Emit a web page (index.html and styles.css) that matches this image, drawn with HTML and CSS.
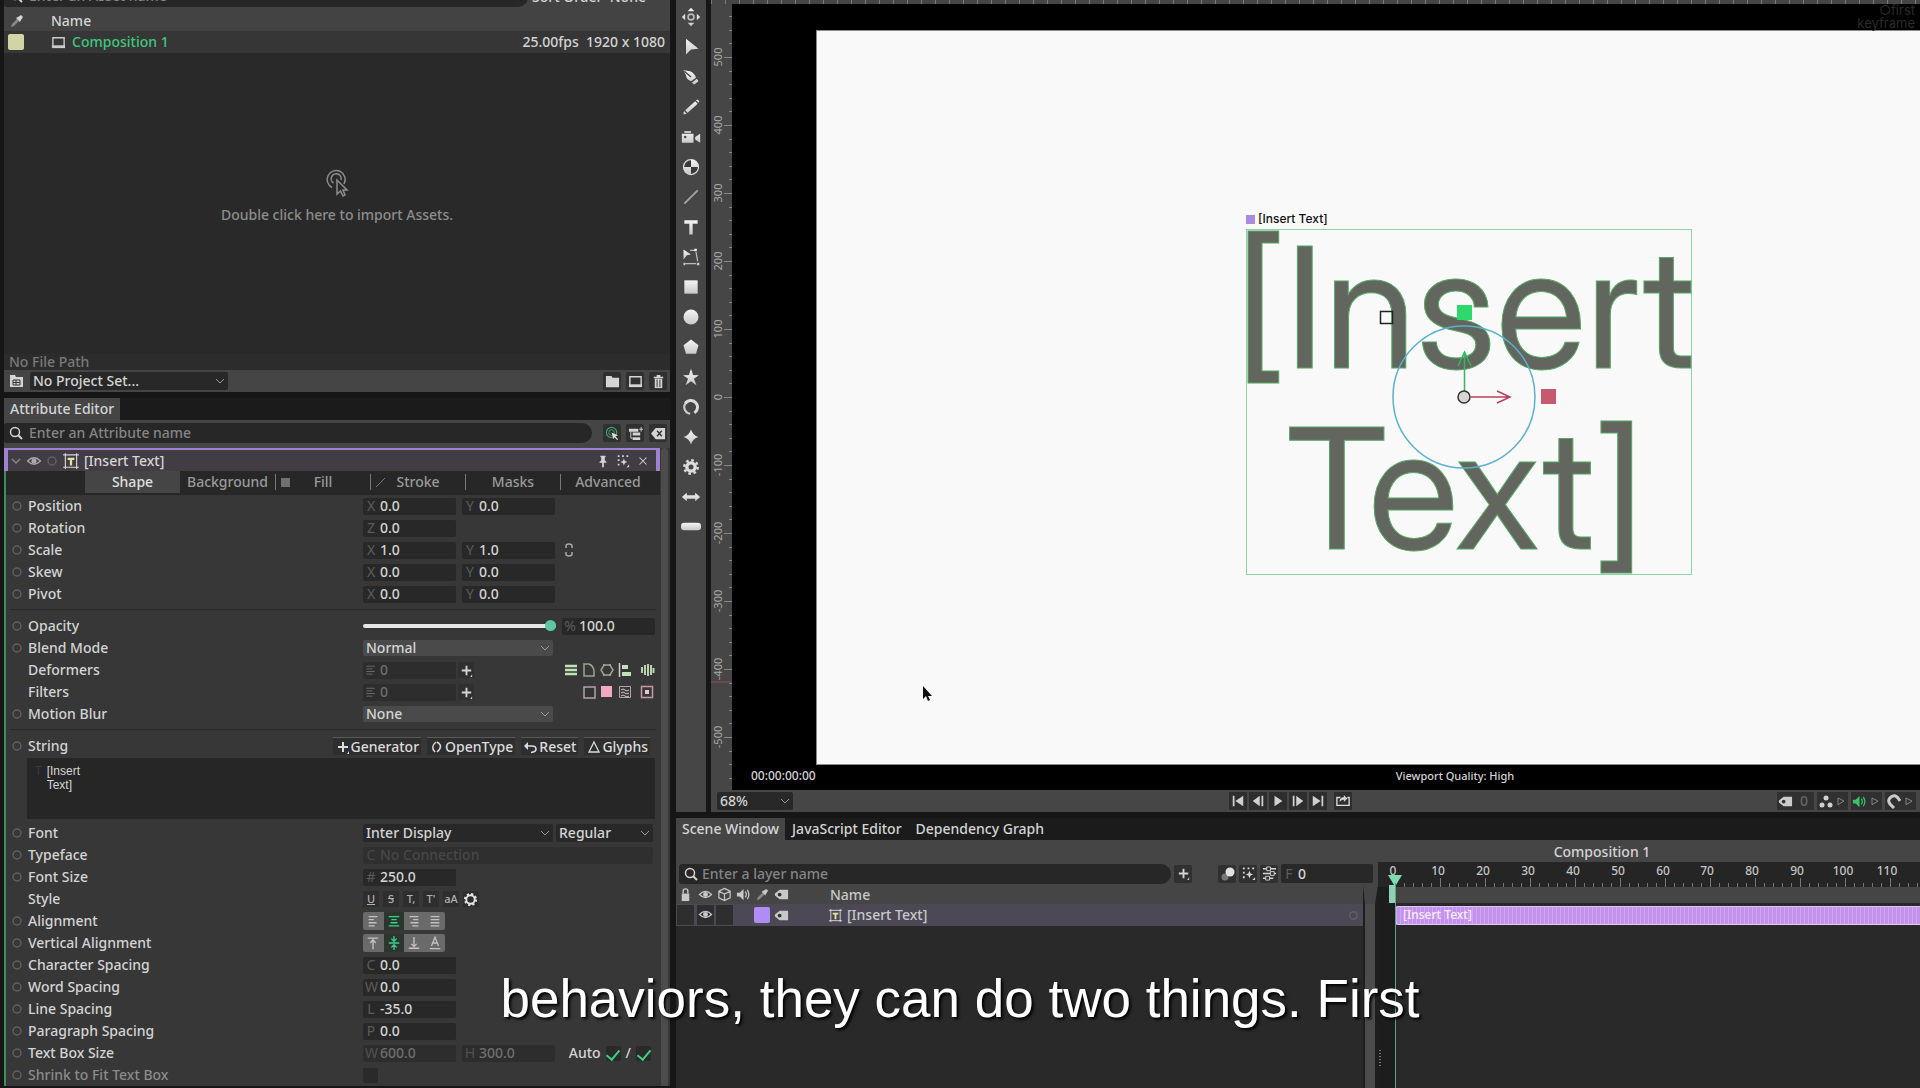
FILE: index.html
```html
<!DOCTYPE html>
<html lang="en">
<head>
<meta charset="utf-8">
<title>Composition 1</title>
<link rel="stylesheet" href="styles.css">
</head>
<body>
<svg class="defs" aria-hidden="true">
  <defs>
    <linearGradient id="metal" x1="0" y1="0" x2="0" y2="1"><stop offset="0" stop-color="#f4f4f4"/><stop offset="1" stop-color="#c8c8c8"/></linearGradient>
    <symbol id="search" viewBox="0 0 16 16"><circle cx="7" cy="7" r="4.5" fill="none" stroke="currentColor" stroke-width="1.5"/><path d="M10 10l4 4" stroke="currentColor" stroke-width="2"/></symbol>
    <symbol id="dropper" viewBox="0 0 16 16"><path d="M2 14l1-3 5-5 2 2-5 5z" fill="#888"/><path d="M7 5l4 4 1-2 2-3-2-2-3 2z" fill="currentColor"/></symbol>
    <symbol id="screen" viewBox="0 0 16 16"><path d="M2 3h12v10H2z" fill="none" stroke="currentColor" stroke-width="1.5"/><path d="M1 11h14v3H1z" fill="currentColor"/></symbol>
    <symbol id="folder" viewBox="0 0 16 16"><path d="M1 2h6l1 2h7v10H1z" fill="currentColor"/></symbol>
    <symbol id="project" viewBox="0 0 16 16"><path d="M1 2h5l1 2h7v10H1z" fill="currentColor"/><path d="M4 7h7v5H4zM4 9.500h7M7 7v5" stroke="#333" fill="none"/></symbol>
    <symbol id="trash" viewBox="0 0 16 16"><path d="M3 3h10v1.500H3zM6 1h4v2H6z" fill="currentColor"/><path d="M4 5h8v10H4z" fill="currentColor"/><path d="M6.500 6v8M9.500 6v8" stroke="#333"/></symbol>
    <symbol id="eye" viewBox="0 0 16 16"><path d="M1.500 8Q8 1.500 14.500 8Q8 14.500 1.500 8z" fill="none" stroke="currentColor" stroke-width="1.200"/><circle cx="8" cy="8" r="2.600" fill="currentColor"/></symbol>
    <symbol id="dot" viewBox="0 0 16 16"><circle cx="8" cy="8" r="4" fill="none" stroke="currentColor" stroke-width="1.500"/></symbol>
    <symbol id="texticon" viewBox="0 0 16 16"><path d="M3 1v14M13 1v14M1 2.500h14M1 13.500h14" stroke="#d8d8d8" stroke-width="1" fill="none"/><path d="M5 5h6v2H9v5H7V7H5z" fill="#e3e29a"/></symbol>
    <symbol id="chev" viewBox="0 0 16 16"><path d="M4 6l4 4 4-4" fill="none" stroke="currentColor" stroke-width="1.500"/></symbol>
    <symbol id="pin" viewBox="0 0 16 16"><path d="M5 2h6v1l-1 1v3l2 2v1H9v5H7v-5H4V9l2-2V4L5 3z" fill="currentColor"/></symbol>
    <symbol id="spark" viewBox="0 0 16 16"><path d="M2 2.500h2M7 2.500h2M12 2.500h2M2 7h2M2 12h2" stroke="currentColor" stroke-width="2"/><path d="M9 5l1.200 3L13 9l-2.800 1.200L9 13l-1.200-2.800L5 9l2.800-1z" fill="currentColor"/><path d="M12 15l3-3v3z" fill="currentColor"/></symbol>
    <symbol id="cross" viewBox="0 0 16 16"><path d="M4 4l8 8M12 4l-8 8" stroke="currentColor" stroke-width="1.200"/></symbol>
    <symbol id="plus" viewBox="0 0 16 16"><path d="M8 3v10M3 8h10" stroke="currentColor" stroke-width="2"/><path d="M12 15l2-3v3z" fill="currentColor"/></symbol>
    <symbol id="target" viewBox="0 0 16 16"><circle cx="7" cy="7" r="5.500" fill="none" stroke="#3fa36b" stroke-width="1.200"/><circle cx="7" cy="7" r="3" fill="none" stroke="#3fa36b"/><path d="M7 7l7 3-3 1 3 3-1 1-3-3-1 2z" fill="#ddd"/></symbol>
    <symbol id="tree" viewBox="0 0 16 16"><path d="M1 3h10v3H1zM5 7h8v3H5zM5 12h8v3H5z" fill="currentColor"/><path d="M3 6v7h2M14 1v5M12 3.500h4" stroke="currentColor" fill="none"/></symbol>
    <symbol id="clear" viewBox="0 0 16 16"><path d="M5 2h10v12H5L0 8z" fill="currentColor"/><path d="M6.500 5l5 6M11.500 5l-5 6" stroke="#333" stroke-width="1.500"/></symbol>
    <symbol id="chain" viewBox="0 0 16 16"><path d="M5 6V4q0-2 3-2t3 2v2M5 10v2q0 2 3 2t3-2v-2" fill="none" stroke="currentColor" stroke-width="1.500"/></symbol>
    <symbol id="lines" viewBox="0 0 16 16"><path d="M2 3h11M2 6.500h8M2 10h11M2 13.500h8" stroke="currentColor" stroke-width="1.200"/></symbol>
    <symbol id="tag" viewBox="0 0 16 16"><path d="M6 3h9v10H6L1 9V7z" fill="currentColor"/><circle cx="6" cy="8" r="2" fill="#333"/></symbol>
    <symbol id="lock" viewBox="0 0 16 16"><path d="M4 7h8v8H4z" fill="currentColor"/><path d="M5.500 7V4q0-2 2.500-2t2.500 2v3" fill="none" stroke="currentColor" stroke-width="1.500"/></symbol>
    <symbol id="cube" viewBox="0 0 16 16"><path d="M8 1.500l6 3v7l-6 3-6-3v-7zM2 4.500l6 3 6-3M8 7.500v7" fill="none" stroke="currentColor" stroke-width="1.300"/></symbol>
    <symbol id="speaker" viewBox="0 0 16 16"><path d="M1 6h3l4-4v12l-4-4H1z" fill="currentColor"/><path d="M10 5q2 3 0 6M12 3q3.500 5 0 10" fill="none" stroke="currentColor" stroke-width="1.300"/></symbol>
    <symbol id="gear" viewBox="0 0 16 16"><circle cx="8" cy="8" r="4.500" fill="none" stroke="currentColor" stroke-width="2"/><circle cx="8" cy="8" r="6" fill="none" stroke="currentColor" stroke-width="2" stroke-dasharray="2.350"/></symbol>
    <symbol id="tri" viewBox="0 0 16 16"><path d="M4 4l8 4-8 5z" fill="none" stroke="currentColor" stroke-width="1.300"/></symbol>
    <symbol id="undo" viewBox="0 0 16 16"><path d="M4 7h5q4 0 4 3t-5 3.500" fill="none" stroke="currentColor" stroke-width="1.600"/><path d="M1 7l4-4v8z" fill="currentColor"/></symbol>
    <symbol id="bevel" viewBox="0 0 16 16"><path d="M3 2h5q5 2 5 8v4H3z" fill="none" stroke="currentColor" stroke-width="1.500"/></symbol>
    <symbol id="hex" viewBox="0 0 16 16"><path d="M5 3h6l3 5-3 5H5L2 8z" fill="none" stroke="currentColor" stroke-width="1.500"/><path d="M4 2h2v2H4zM10 2h2v2h-2zM4 12h2v2H4zM10 12h2v2h-2z" fill="currentColor"/></symbol>
  </defs>
</svg>

<main class="app">
  <section class="side">
    <div class="assets">
      <div class="asset-search">
        <label class="pill"><svg class="ic"><use href="#search"/></svg><input type="text" placeholder="Enter an Asset name" aria-label="Asset search"></label>
        <span class="sort">Sort Order&nbsp; None</span>
      </div>
      <table class="asset-table">
        <colgroup><col class="c-swatch"><col><col class="c-meta"></colgroup>
        <thead><tr><th><svg class="ic"><use href="#dropper"/></svg></th><th>Name</th><th></th></tr></thead>
        <tbody><tr><td><span class="swatch cream"></span></td><td class="comp"><svg class="ic"><use href="#screen"/></svg>Composition 1</td><td class="meta">25.00fps&nbsp; 1920 x 1080</td></tr></tbody>
      </table>
      <div class="drop">
        <svg width="24" height="30" viewBox="0 0 24 30" fill="none" stroke="#8d8d8d" stroke-width="1.500"><path d="M7 18.500A9 9 0 1 1 19 15M8.500 14A5 5 0 1 1 16 11"/><path d="M12 11v14l3.500-3 2.500 5 2-1-2-5h4z" fill="#292929"/></svg>
        <p>Double click here to import Assets.</p>
      </div>
      <div class="path">No File Path</div>
      <div class="projbar">
        <svg class="ic"><use href="#project"/></svg>
        <select class="field" aria-label="Project"><option>No Project Set...</option></select>
        <button class="tool" aria-label="New folder"><svg class="ic"><use href="#folder"/></svg></button>
        <button class="tool" aria-label="New composition"><svg class="ic"><use href="#screen"/></svg></button>
        <button class="tool" aria-label="Delete"><svg class="ic"><use href="#trash"/></svg></button>
      </div>
    </div>

    <div class="tabs"><button class="tab on">Attribute Editor</button></div>
    <div class="searchrow">
      <label class="pill"><svg class="ic"><use href="#search"/></svg><input type="text" placeholder="Enter an Attribute name" aria-label="Attribute search"></label>
      <button class="tool" aria-label="Auto load"><svg class="ic"><use href="#target"/></svg></button>
      <button class="tool" aria-label="Hierarchy"><svg class="ic"><use href="#tree"/></svg></button>
      <button class="tool" aria-label="Clear"><svg class="ic"><use href="#clear"/></svg></button>
    </div>
    <div class="editor">
      <div class="attrs">
        <header class="layerhead">
          <svg class="ic dim"><use href="#chev"/></svg><svg class="ic mid"><use href="#eye"/></svg><svg class="ic faint"><use href="#dot"/></svg><svg class="ic big"><use href="#texticon"/></svg>
          <h2>[Insert Text]</h2>
          <button class="tool flat" aria-label="Pin"><svg class="ic"><use href="#pin"/></svg></button>
          <button class="tool flat" aria-label="Behaviours"><svg class="ic"><use href="#spark"/></svg></button>
          <button class="tool flat" aria-label="Close"><svg class="ic"><use href="#cross"/></svg></button>
        </header>
        <div class="body">
        <nav class="subtabs">
          <button class="on">Shape</button><button>Background</button><button><i class="sq"></i>Fill</button><button><i class="slash"></i>Stroke</button><button>Masks</button><button>Advanced</button>
        </nav>
        <div class="rows">
          <div class="row"><svg class="ic faint"><use href="#dot"/></svg><span>Position</span><div class="vals"><label class="num"><b>X</b><input value="0.0"></label><label class="num"><b>Y</b><input value="0.0"></label></div></div>
          <div class="row"><svg class="ic faint"><use href="#dot"/></svg><span>Rotation</span><div class="vals"><label class="num"><b>Z</b><input value="0.0"></label></div></div>
          <div class="row"><svg class="ic faint"><use href="#dot"/></svg><span>Scale</span><div class="vals"><label class="num"><b>X</b><input value="1.0"></label><label class="num"><b>Y</b><input value="1.0"></label><svg class="ic mid"><use href="#chain"/></svg></div></div>
          <div class="row"><svg class="ic faint"><use href="#dot"/></svg><span>Skew</span><div class="vals"><label class="num"><b>X</b><input value="0.0"></label><label class="num"><b>Y</b><input value="0.0"></label></div></div>
          <div class="row"><svg class="ic faint"><use href="#dot"/></svg><span>Pivot</span><div class="vals"><label class="num"><b>X</b><input value="0.0"></label><label class="num"><b>Y</b><input value="0.0"></label></div></div>
          <hr>
          <div class="row"><svg class="ic faint"><use href="#dot"/></svg><span>Opacity</span><div class="vals"><input class="slider" type="range" min="0" max="100" value="100" aria-label="Opacity"><label class="num"><b>%</b><input value="100.0"></label></div></div>
          <div class="row"><svg class="ic faint"><use href="#dot"/></svg><label for="blend">Blend Mode</label><div class="vals"><select id="blend" class="field light"><option>Normal</option></select></div></div>
          <div class="row"><i></i><span>Deformers</span><div class="vals"><label class="num off"><svg class="ic"><use href="#lines"/></svg><input value="0"></label><button class="tool" aria-label="Add deformer"><svg class="ic"><use href="#plus"/></svg></button>
            <div class="minis green"><svg class="ic"><path d="M2 4h12M2 8h12M2 12h12" stroke="#bfe3b4" stroke-width="2.500"/></svg><svg class="ic"><use href="#bevel"/></svg><svg class="ic"><use href="#hex"/></svg><svg class="ic"><path d="M2.500 1v14" stroke="#ccc" stroke-width="1.500"/><path d="M5 3h6v4H5zM5 10h9v4H5z" fill="#bfe3b4"/></svg><svg class="ic last"><path d="M3 5v6M6 3v10M9 2v12M12 3v10M14.500 6v5" stroke="#b9d3b1" stroke-width="2"/></svg></div></div></div>
          <div class="row"><i></i><span>Filters</span><div class="vals"><label class="num off"><svg class="ic"><use href="#lines"/></svg><input value="0"></label><button class="tool" aria-label="Add filter"><svg class="ic"><use href="#plus"/></svg></button>
            <div class="minis pink"><svg class="ic"><path d="M3 3h11v11H3z" fill="#333" stroke="#b9a0a8" stroke-width="1.500"/></svg><svg class="ic"><path d="M2 2h11v11H2z" fill="#f0a9bf"/></svg><svg class="ic"><path d="M2.500 2.500h11v11h-11z" fill="none" stroke="#b9a0a8"/><path d="M4 6q2-2 4 0t4 0M4 9q2-2 4 0t4 0M4 12q2-2 4 0t4 0" fill="none" stroke="#d8c8cc"/></svg><svg class="ic last"><path d="M2.500 2.500h11v11h-11z" fill="none" stroke="#c29aa8" stroke-width="1.500"/><path d="M6 6h4v4H6z" fill="#ecc3d0"/></svg></div></div></div>
          <div class="row"><svg class="ic faint"><use href="#dot"/></svg><label for="mblur">Motion Blur</label><div class="vals"><select id="mblur" class="field light"><option>None</option></select></div></div>
          <hr>
          <div class="row strrow"><svg class="ic faint"><use href="#dot"/></svg><label for="str">String</label>
            <div class="strbtns"><button><svg class="ic"><use href="#plus"/></svg>Generator</button><button><svg class="ic"><path d="M7 3Q1 8 6 13M8 3q7 4 0 10" fill="none" stroke="currentColor" stroke-width="1.500"/></svg>OpenType</button><button><svg class="ic"><use href="#undo"/></svg>Reset</button><button><svg class="ic"><path d="M8 3l5 10H3z" fill="none" stroke="currentColor" stroke-width="1.300"/></svg>Glyphs</button></div></div>
          <div class="string"><b>T</b><textarea id="str" spellcheck="false">[Insert
Text]</textarea></div>
          <div class="row"><svg class="ic faint"><use href="#dot"/></svg><label for="font">Font</label><div class="vals tight"><select id="font" class="field"><option>Inter Display</option></select><select class="field small" aria-label="Font style"><option>Regular</option></select></div></div>
          <div class="row"><svg class="ic faint"><use href="#dot"/></svg><span>Typeface</span><div class="vals"><label class="num wide"><b>C</b><input value="No Connection" disabled></label></div></div>
          <div class="row"><svg class="ic faint"><use href="#dot"/></svg><span>Font Size</span><div class="vals"><label class="num"><b>#</b><input value="250.0"></label></div></div>
          <div class="row"><i></i><span>Style</span><div class="styles"><button><u>U</u></button><button><s>S</s></button><button>T,</button><button>T'</button><button>aA</button><button class="bright" aria-label="Style options"><svg class="ic"><use href="#gear"/></svg></button></div></div>
          <div class="row"><svg class="ic faint"><use href="#dot"/></svg><span>Alignment</span><div class="seg">
            <button aria-label="Left"><svg class="ic" viewBox="0 0 16 16"><path d="M3 3h10M3 6.500h6M3 10h9M3 13.500h7"/></svg></button><button class="on" aria-label="Centre"><svg class="ic" viewBox="0 0 16 16"><path d="M2 3h12M5 6.500h6M4 10h8M2 13.500h12"/></svg></button><button aria-label="Right"><svg class="ic" viewBox="0 0 16 16"><path d="M3 3h10M7 6.500h6M4 10h9M6 13.500h7"/></svg></button><button aria-label="Justify"><svg class="ic" viewBox="0 0 16 16"><path d="M3 3h10M3 6.500h10M3 10h10M3 13.500h10"/></svg></button></div></div>
          <div class="row"><svg class="ic faint"><use href="#dot"/></svg><span>Vertical Alignment</span><div class="seg">
            <button aria-label="Top"><svg class="ic" viewBox="0 0 16 16"><path d="M2 2.500h12M8 4v11M5 8l3-4 3 4"/></svg></button><button class="on" aria-label="Middle"><svg class="ic" viewBox="0 0 16 16"><path d="M2 8h12M8 0v6M8 16v-6M5 3l3 3 3-3M5 13l3-3 3 3"/></svg></button><button aria-label="Bottom"><svg class="ic" viewBox="0 0 16 16"><path d="M2 14h12M8 1v11M5 9l3 3 3-3"/></svg></button><button aria-label="Baseline"><svg class="ic" viewBox="0 0 16 16"><path d="M2 14.500h12M4 11.500l4-10 4 10M6 8h4"/></svg></button></div></div>
          <div class="row"><svg class="ic faint"><use href="#dot"/></svg><span>Character Spacing</span><div class="vals"><label class="num"><b>C</b><input value="0.0"></label></div></div>
          <div class="row"><svg class="ic faint"><use href="#dot"/></svg><span>Word Spacing</span><div class="vals"><label class="num"><b>W</b><input value="0.0"></label></div></div>
          <div class="row"><svg class="ic faint"><use href="#dot"/></svg><span>Line Spacing</span><div class="vals"><label class="num"><b>L</b><input value="-35.0"></label></div></div>
          <div class="row"><svg class="ic faint"><use href="#dot"/></svg><span>Paragraph Spacing</span><div class="vals"><label class="num"><b>P</b><input value="0.0"></label></div></div>
          <div class="row"><svg class="ic faint"><use href="#dot"/></svg><span>Text Box Size</span><div class="vals"><label class="num off"><b>W</b><input value="600.0"></label><label class="num off"><b>H</b><input value="300.0"></label><div class="auto">Auto<input type="checkbox" checked aria-label="Auto width">/<input type="checkbox" checked aria-label="Auto height"></div></div></div>
          <div class="row"><svg class="ic faint"><use href="#dot"/></svg><label class="muted" for="shrink">Shrink to Fit Text Box</label><div class="vals"><input id="shrink" type="checkbox" disabled></div></div>
        </div>
        </div>
      </div>
      <div class="scroll"></div>
    </div>
  </section>

  <section class="stage">
    <aside class="toolbar">
      <button aria-label="Navigate"><svg viewBox="0 0 24 24"><path d="M12 1l4 4H8zM12 23l4-4H8zM1 12l4-4v8zM23 12l-4-4v8z"/><circle cx="12" cy="12" r="3.500" fill="none" stroke="#bbb" stroke-width="2"/></svg></button>
      <button aria-label="Select"><svg viewBox="0 0 24 24"><path d="M6 2l15 12-9 1-6 6z"/></svg></button>
      <button aria-label="Pen"><svg viewBox="0 0 24 24"><path d="M3 4l8 1q6 3 7 8l-6 4Q6 15 6 10zM19 14l2 3-5 4-3-2z"/><path d="M4 5l8 7" stroke="#444" stroke-width="1.500"/></svg></button>
      <button aria-label="Pencil"><svg viewBox="0 0 24 24"><path d="M5 16L17 5l3 3L8 19zM18 4l2-1 2 2-1 2zM3 18l1-1 3 3-4 1z"/></svg></button>
      <button aria-label="Camera"><svg viewBox="0 0 24 24"><path d="M1 8h14v11H1zM17 12l6-4v11l-6-4zM4 5h8v2H4z"/><circle cx="5" cy="12" r="1.500" fill="#444"/></svg></button>
      <button aria-label="Null"><svg viewBox="0 0 24 24"><circle cx="12" cy="12" r="9" fill="#3a3a3a" stroke="#ddd" stroke-width="1.500"/><path d="M12 12H3a9 9 0 0 0 9 9zM12 12V3a9 9 0 0 1 9 9z"/></svg></button>
      <button aria-label="Line"><svg viewBox="0 0 24 24"><path d="M4 20L20 4" stroke="#a8a8a8" stroke-width="2"/></svg></button>
      <button aria-label="Text"><svg viewBox="0 0 24 24"><path d="M4 4h16v4h-6v13h-4V8H4z"/></svg></button>
      <button aria-label="Transform"><svg viewBox="0 0 24 24"><path d="M3 3l9 6-5 1-4 5z"/><path d="M11 4h6M18 6l2 11M5 20h13" stroke="#bbb" stroke-width="1.500" fill="none"/><path d="M16 2h3v3h-3zM3 19h2v3H3zM19 19h3v3h-3z"/></svg></button>
      <button aria-label="Rectangle"><svg viewBox="0 0 24 24"><path d="M4 4h16v16H4z"/></svg></button>
      <button aria-label="Ellipse"><svg viewBox="0 0 24 24"><circle cx="12" cy="12" r="9"/></svg></button>
      <button aria-label="Polygon"><svg viewBox="0 0 24 24"><path d="M12 3l9 7-3 10H6L3 10z"/></svg></button>
      <button aria-label="Star"><svg viewBox="0 0 24 24"><path d="M12 2l2.500 7.500 7 .5-6 4 3 8-6.500-5-6.500 5 3-8-6-4 7-.5z"/></svg></button>
      <button aria-label="Arc"><svg viewBox="0 0 24 24"><path d="M5 8A8 8 0 1 1 16 19" fill="none" stroke="#ddd" stroke-width="3.500"/><path d="M5 8A8 8 0 0 0 11 20" fill="none" stroke="#ccc" stroke-width="2.500"/></svg></button>
      <button aria-label="Super ellipse"><svg viewBox="0 0 24 24"><path d="M12 3q2 7 9 9-7 2-9 9-2-7-9-9 7-2 9-9z"/></svg></button>
      <button aria-label="Cogwheel"><svg viewBox="0 0 24 24"><circle cx="12" cy="12" r="5" fill="none" stroke="#ddd" stroke-width="4"/><circle cx="12" cy="12" r="8" fill="none" stroke="#ddd" stroke-width="3" stroke-dasharray="3.140"/></svg></button>
      <button aria-label="Arrow"><svg viewBox="0 0 24 24"><path d="M1 12l6-5v3h10V7l6 5-6 5v-3H7v3z"/></svg></button>
      <button aria-label="Capsule"><svg viewBox="0 0 24 24"><rect x="0" y="7" width="24" height="9" rx="4"/></svg></button>
    </aside>

    <div class="viewport">
      <div class="topruler"></div>
      <svg class="ruler" width="21" height="786" aria-label="Vertical ruler">
        <defs><pattern id="vt" width="21" height="68" y="53" patternUnits="userSpaceOnUse"><path d="M13 .5h8M18 14.500h3M18 27.500h3M18 41.500h3M18 54.500h3" stroke="#858585"/></pattern></defs>
        <rect width="21" height="786" fill="url(#vt)"/><path d="M0 678h21" stroke="#8a5050"/>
        <g class="rtext"><text transform="translate(11 53) rotate(-90)">500</text><text transform="translate(11 121) rotate(-90)">400</text><text transform="translate(11 189) rotate(-90)">300</text><text transform="translate(11 257) rotate(-90)">200</text><text transform="translate(11 325) rotate(-90)">100</text><text transform="translate(11 393) rotate(-90)">0</text><text transform="translate(11 461) rotate(-90)">-100</text><text transform="translate(11 529) rotate(-90)">-200</text><text transform="translate(11 597) rotate(-90)">-300</text><text transform="translate(11 665) rotate(-90)">-400</text><text transform="translate(11 733) rotate(-90)">-500</text></g>
      </svg>
      <div class="canvas">
        <div class="sheet">
          <div class="lname"><i></i>[Insert Text]</div>
          <div class="bigtext"><p>[Insert<br>Text]</p></div>
          <svg class="gizmo" width="240" height="200" viewBox="0 0 240 200" fill="none">
            <rect x="50.500" y="26.500" width="12" height="12" stroke="#222" stroke-width="1.500"/>
            <path d="M127 20h15v15h-15z" fill="#2fd86c"/><path d="M211 104h15v15h-15z" fill="#c4596f"/>
            <circle cx="134" cy="112" r="71" stroke="#5ab0cf" stroke-width="1.500"/>
            <path d="M134.500 106V67M128 81l6.500-14 6.500 14" stroke="#35b565" stroke-width="1.500"/>
            <path d="M141 112h38M167 106l13 6-13 6" stroke="#b5415c" stroke-width="1.500"/>
            <circle cx="134" cy="112" r="6" fill="#d6d6d6" stroke="#333" stroke-width="1.500"/>
          </svg>
          <svg class="cursor" width="12" height="18" viewBox="0 0 12 18"><path d="M1 1v13l3-3 2 5 2-1-2-4h4z" fill="#111"/></svg>
        </div>
        <div class="brand"><div>○first</div><div>keyframe</div></div>
        <div class="tc">00:00:00:00</div>
        <div class="quality">Viewport Quality: High</div>
      </div>
      <div class="playbar">
        <select class="field zoom" aria-label="Zoom"><option>68%</option></select>
        <div class="play">
          <button aria-label="First frame"><svg class="ic" viewBox="0 0 16 16"><path d="M2 2h2v12H2zM14 2v12L5 8z"/></svg></button><button aria-label="Previous frame"><svg class="ic" viewBox="0 0 16 16"><path d="M10 2v12L2 8zM12 2h2v12h-2z"/></svg></button><button aria-label="Play"><svg class="ic" viewBox="0 0 16 16"><path d="M4 2l9 6-9 6z"/></svg></button><button aria-label="Next frame"><svg class="ic" viewBox="0 0 16 16"><path d="M2 2h2v12H2zM6 2l8 6-8 6z"/></svg></button><button aria-label="Last frame"><svg class="ic" viewBox="0 0 16 16"><path d="M2 2l9 6-9 6zM12 2h2v12h-2z"/></svg></button><button class="loop" aria-label="Loop"><svg class="ic" viewBox="0 0 16 16"><path d="M5 4H1v9h14V4h-2" fill="none" stroke="#ddd" stroke-width="1.500"/><path d="M4 9q0-5 5-5.500V1l4 4-4 4V6.500q-3 0-5 2.500z"/></svg></button>
        </div>
        <div class="opts">
          <span class="opt"><svg class="ic"><use href="#tag"/></svg><em>0</em></span>
          <span class="opt"><svg class="ic"><circle cx="8" cy="4" r="2.500"/><circle cx="4" cy="11" r="2.500"/><circle cx="12" cy="11" r="2.500"/></svg><svg class="ic sm"><use href="#tri"/></svg></span>
          <span class="opt"><svg class="ic on"><use href="#speaker"/></svg><svg class="ic sm"><use href="#tri"/></svg></span>
          <span class="opt"><svg class="ic"><path d="M8 14L4 10q-3-4 1-7t7 1l2 3" fill="none" stroke="#ccc" stroke-width="3"/></svg><svg class="ic sm"><use href="#tri"/></svg></span>
        </div>
      </div>
    </div>
  </section>

  <section class="scene">
    <div class="tabs"><button class="tab on">Scene Window</button><button class="tab">JavaScript Editor</button><button class="tab">Dependency Graph</button></div>
    <div class="scenebody">
      <div class="layers">
        <div class="searchrow">
          <label class="pill"><svg class="ic"><use href="#search"/></svg><input type="text" placeholder="Enter a layer name" aria-label="Layer search"></label>
          <button class="tool" aria-label="Add"><svg class="ic"><use href="#plus"/></svg></button>
          <div class="fr">
            <button class="tool" aria-label="Motion blur"><svg class="ic"><circle cx="5" cy="11" r="3.500" fill="#777"/><circle cx="10" cy="6" r="4.500" fill="#e2e2e2"/></svg></button>
            <button class="tool" aria-label="Behaviours"><svg class="ic"><use href="#spark"/></svg></button>
            <button class="tool" aria-label="Filter"><svg class="ic" viewBox="0 0 16 16"><path d="M1 3h14M1 8h14M1 13h11" stroke="currentColor" stroke-width="1.500"/><path d="M5 1h4v4H5zM9 6h4v4H9zM4 11h4v4H4z" fill="#2a2a2a" stroke="currentColor"/></svg></button>
            <label class="num"><b>F</b><input value="0"></label>
          </div>
        </div>
        <div class="layerwrap">
          <table class="layertable">
            <colgroup><col class="c0"><col class="c1"><col class="c1"><col class="c1"><col class="c1"><col class="c1"><col><col class="c1"></colgroup>
            <thead><tr><th><svg class="ic"><use href="#lock"/></svg></th><th><svg class="ic"><use href="#eye"/></svg></th><th><svg class="ic"><use href="#cube"/></svg></th><th><svg class="ic"><use href="#speaker"/></svg></th><th><svg class="ic"><use href="#dropper"/></svg></th><th><svg class="ic"><use href="#tag"/></svg></th><th class="nm">Name</th><th></th></tr></thead>
            <tbody><tr><td><i class="cell"></i></td><td><i class="cell"><svg class="ic"><use href="#eye"/></svg></i></td><td><i class="cell"></i></td><td></td><td><span class="swatch purple"></span></td><td><svg class="ic"><use href="#tag"/></svg></td><td class="nm"><svg class="ic"><use href="#texticon"/></svg>[Insert Text]</td><td><svg class="ic faint"><use href="#dot"/></svg></td></tr></tbody>
          </table>
          <div class="scroll"></div>
        </div>
      </div>
      <div class="timeline">
        <div class="comptitle">Composition 1</div>
        <svg class="truler" width="100%" height="25" aria-label="Frame ruler">
          <defs><pattern id="tt" x="17" width="45" height="25" patternUnits="userSpaceOnUse"><path d="M.5 16v9M9.500 21v4M18.500 21v4M27.500 21v4M36.500 21v4" stroke="#777"/></pattern></defs>
          <rect x="17" width="100%" height="25" fill="url(#tt)"/>
          <g class="ttext"><text x="15" y="13">0</text><text x="60" y="13">10</text><text x="105" y="13">20</text><text x="150" y="13">30</text><text x="195" y="13">40</text><text x="240" y="13">50</text><text x="285" y="13">60</text><text x="329" y="13">70</text><text x="374" y="13">80</text><text x="419" y="13">90</text><text x="465" y="13">100</text><text x="509" y="13">110</text></g>
        </svg>
        <div class="strip"></div>
        <div class="tracks"><div class="clip">[Insert Text]</div></div>
        <svg class="playhead" width="16" height="220" viewBox="0 0 16 220"><path d="M1 0h14l-6 10H7z" fill="#7fdcb4"/><path d="M2 10h6v18H2z" fill="#8fd0b6"/><path d="M8.500 8v212" stroke="#58a58c"/></svg>
        <div class="grip"></div>
      </div>
    </div>
  </section>
</main>
<p class="caption">behaviors, they can do two things. First</p>
</body>
</html>
```
FILE: styles.css
```css
* { box-sizing: border-box; }
body { margin: 0; background: #161616; color: #d4d4d4; font: 500 14px/22px "Noto Sans", sans-serif; overflow: hidden; }
button, input, select, textarea { font: inherit; color: inherit; border: 0; background: none; padding: 0; margin: 0; min-width: 0; }
h2, p { margin: 0; font: inherit; }
i, em { font-style: normal; }
.defs { position: absolute; width: 0; height: 0; }
.ic { width: 16px; height: 16px; flex: none; display: block; fill: #d0d0d0; }
.ic.dim { color: #888; } .ic.mid { color: #aaa; } .ic.faint { color: #606060; }
.ic.big { width: 18px; height: 18px; }
.ic.on { color: #35c46c; }
.app { display: grid; grid-template-columns: 670px minmax(0, 1fr); grid-template-rows: minmax(0, 1fr) 276px; column-gap: 6px; height: 100vh; }

/* left column */
.side { grid-row: 1 / 3; padding-left: 4px; display: flex; flex-direction: column; min-height: 0; overflow: hidden; }
.side > * { flex: none; }
.assets { height: 392px; display: flex; flex-direction: column; margin-bottom: 6px; background: #292929; }
.asset-search { height: 11px; background: #434343; display: flex; align-items: flex-end; overflow: hidden; padding-bottom: 4px; }
.asset-search .pill { width: 524px; flex: none; height: 22px; }
.sort { padding-left: 4px; line-height: 24px; height: 22px; }
.pill { display: flex; align-items: center; gap: 5px; flex: 1; height: 20px; padding-left: 4px; background: #272727; border-radius: 3px 10px 10px 3px; }
.pill input { flex: 1; height: 20px; outline: 0; }
.pill input::placeholder { color: #858585; opacity: 1; }
.asset-table { width: 100%; border-collapse: collapse; table-layout: fixed; }
.asset-table th, .asset-table td { padding: 0; text-align: left; font-weight: inherit; height: 20px; line-height: 20px; }
.asset-table thead tr { background: #434343; }
.asset-table tbody tr { background: #363636; }
.asset-table td { height: 22px; line-height: 22px; }
.c-swatch { width: 47px; } .c-meta { width: 180px; }
.asset-table th .ic { margin-left: 5px; }
.swatch { display: block; width: 16px; height: 16px; border-radius: 2px; }
.cream { background: #d3d3a4; margin-left: 4px; }
.comp { color: #3fc67f; }
.comp .ic { display: inline-block; vertical-align: -3px; margin-right: 6px; color: #ccc; width: 15px; height: 15px; }
.asset-table td.meta { text-align: right; padding-right: 5px; }
.drop { flex: 1; display: flex; flex-direction: column; align-items: center; justify-content: center; gap: 5px; color: #8d8d8d; padding-bottom: 12px; }
.path { height: 16px; line-height: 16px; padding-left: 5px; color: #7a7a7a; background: #2c2c2c; }
.projbar { height: 22px; background: #454545; display: flex; align-items: center; gap: 5px; padding: 0 3px 0 5px; }
.projbar .field { width: 198px; margin-right: auto; }
.field { height: 18px; line-height: 18px; padding: 0 18px 0 3px; appearance: none; border-radius: 2px; background: #282828 url("data:image/svg+xml,%3Csvg xmlns='http://www.w3.org/2000/svg' width='10' height='8'%3E%3Cpath d='M1 2l4 4 4-4' fill='none' stroke='%23999'/%3E%3C/svg%3E") no-repeat right 3px center; }
.field.light { background-color: #4a4a4a; width: 190px; height: 16px; line-height: 16px; }
.tool { width: 18px; height: 18px; display: grid; place-items: center; background: #303030; border-radius: 2px; }
.tool .ic { width: 15px; height: 15px; }
.tool.flat { background: none; }
.tabs { display: flex; height: 22px; background: #1b1b1b; }
.tab { padding: 0 6px; height: 22px; white-space: nowrap; }
.tab.on { background: #454545; }
.searchrow { display: flex; align-items: center; gap: 5px; height: 28px; padding: 0 3px 2px 0; background: #454545; }
.searchrow .tool:first-of-type { margin-left: 6px; }
.editor { display: flex; background: #373737; }
.editor > .scroll { width: 10px; margin: 0 2px 0 1px; background: #4c4c4c; border-radius: 5px 5px 0 0; }
.attrs { flex: 1; }
.layerhead { display: flex; align-items: center; height: 23px; border: 3px solid #9d83d2; border-width: 2px 4px 0 4px; background: #423d45; padding-right: 4px; }
.layerhead h2 { flex: 1; padding-left: 4px; }
.layerhead .ic { margin-right: 2px; }
.layerhead .ic.big { margin: 0; }
.layerhead .tool { margin-left: 2px; }
.layerhead .tool .ic { margin: 0; width: 14px; height: 14px; }
.body { border-left: 2px solid #3f8d5a; }
.subtabs { display: grid; grid-template-columns: repeat(6, 95px); padding-left: 79px; background: #272727; height: 24px; color: #9a9a9a; }
.subtabs button { position: relative; height: 22px; line-height: 22px; }
.subtabs .on { background: #454545; color: #e0e0e0; }
.subtabs button:nth-child(n+3) { border-image: linear-gradient(transparent 4px, #777 4px 18px, transparent 18px) 1; border-style: solid; border-width: 0 0 0 1px; }
.sq, .slash { position: absolute; left: 5px; top: 7px; width: 9px; height: 9px; }
.sq { background: #707070; }
.slash { background: linear-gradient(135deg, transparent 45%, #777 45% 55%, transparent 55%); }
.row { display: grid; grid-template-columns: 22px 335px 1fr; align-items: center; height: 22px; padding-right: 5px; }
.row > .ic { margin-left: 3px; }
.rows hr { border: 0; height: 1px; margin: 4px 4px 5px; background: #2a2a2a; }
.muted { color: #8b8b8b; }
.vals { display: flex; align-items: center; gap: 6px; }
.vals.tight { gap: 3px; }
.vals.tight .field { width: 190px; }
.vals.tight .field.small { width: 97px; }
.num { display: flex; align-items: center; gap: 3px; width: 93px; height: 17px; background: #282828; padding-left: 2px; border-radius: 2px; }
.num b { font-weight: 400; color: #5c5c5c; width: 12px; text-align: center; }
.num input { width: 70px; height: 17px; flex: 1; }
.num.off { background: #2d2d2d; color: #6e6e6e; }
.num.off b { color: #505050; }
.num.off .ic { width: 12px; height: 14px; }
.num.wide { width: 290px; background: #2f2f2f; }
.num.wide input { color: #474747; }
.num.wide b { color: #474747; }
.vals .tool { width: 16px; height: 16px; margin-left: -4px; }
.slider { appearance: none; width: 193px; height: 12px; margin-right: 0; }
.slider::-webkit-slider-runnable-track { height: 4px; background: #e6e6e6; border-radius: 2px; }
.slider::-webkit-slider-thumb { appearance: none; width: 11px; height: 11px; border-radius: 50%; background: #5cc8a4; margin-top: -4px; }
.minis { display: flex; gap: 2px; margin-left: auto; color: #9aa595; }
.minis .ic { height: 16px; }
.minis .last { margin-left: 4px; }
.strrow { grid-template-columns: 22px auto 1fr; }
.strbtns { justify-self: end; display: flex; gap: 6px; padding-right: 5px; }
.strbtns button { display: flex; align-items: center; height: 18px; padding: 0 2px; line-height: 18px; background: #2e2e2e; border-top: 1px solid #585858; color: #dcdcdc; }
.string { display: flex; gap: 5px; height: 61px; margin: 1px 5px 3px 21px; padding: 6px 8px; background: #262626; }
.string b { font: 12px/14px "Noto Sans", sans-serif; color: #3c3c3c; }
.string textarea { flex: 1; resize: none; outline: 0; font: 12px/14px "Liberation Sans", sans-serif; overflow: hidden; }
.styles { display: flex; gap: 4px; }
.styles button { width: 16px; height: 16px; background: #2e2e2e; font-size: 11px; line-height: 16px; color: #b0b0b0; }
.styles .ic { width: 15px; height: 15px; }
.styles .bright { color: #e6e6e6; }
.seg { display: flex; width: 82px; background: #6a6a6a; border-radius: 2px; }
.seg button { flex: 1; height: 18px; display: grid; place-items: center; }
.seg .ic { width: 14px; height: 14px; fill: none; stroke: #c2c2c2; stroke-width: 1.500; }
.seg .on { background: #2b3630; }
.seg .on .ic { stroke: #3ecf86; }
input[type="checkbox"] { appearance: none; width: 15px; height: 15px; background: #2a2a2a; border-radius: 2px; display: grid; place-items: center; }
input[type="checkbox"]:checked::before { content: ""; width: 6px; height: 11px; border: solid #3ecf86; border-width: 0 2px 2px 0; transform: rotate(40deg); }
.auto { display: flex; align-items: center; gap: 5px; margin-left: auto; padding-right: 4px; }

/* centre */
.stage { display: flex; gap: 5px; min-height: 0; background: #161616; }
.toolbar { width: 30px; background: #464646; padding-top: 2px; flex: none; }
.toolbar button { display: grid; place-items: center; width: 30px; height: 30px; }
.toolbar svg { width: 20px; height: 20px; fill: url(#metal); }
.viewport { flex: 1; min-width: 0; display: grid; grid-template-columns: 21px minmax(0, 1fr); grid-template-rows: 4px minmax(0, 1fr) 22px; }
.topruler { grid-column: 1 / 3; background: repeating-linear-gradient(90deg, #7a7a7a 0 1px, transparent 1px 14px) #464646; }
.ruler { background: #464646; min-height: 0; }
.rtext { fill: #a8a8a8; font: 11px "Noto Sans", sans-serif; text-anchor: middle; }
.canvas { position: relative; background: #000; overflow: hidden; }
.sheet { position: absolute; left: 84px; top: 26px; right: 0; bottom: 25px; background: #f9f9f9; border: 1px solid #8a8a8a; border-right: 0; }
.lname { position: absolute; left: 429px; top: 178px; display: flex; align-items: center; gap: 3px; color: #111; font: 500 12px/20px "Inter", sans-serif; }
.lname i { width: 9px; height: 9px; background: #a98be0; }
.bigtext { position: absolute; left: 429px; top: 198px; width: 446px; height: 346px; padding: 0 8px 8px 0; display: grid; place-content: center; border: 1px solid #8fd3a8; color: #62665f; font: 400 168px/181px "Inter Display", "Inter", sans-serif; font-optical-sizing: none; font-variation-settings: "opsz" 32; text-align: center; white-space: nowrap; -webkit-text-stroke: 1px #57a864; }
.gizmo { position: absolute; left: 513px; top: 254px; }
.cursor { position: absolute; left: 105px; top: 654px; }
.brand { position: absolute; right: 5px; top: 0; text-align: right; font: 13px/13px "Inter", sans-serif; color: #2b2b2b; }
.tc, .quality { position: absolute; bottom: 4px; line-height: 20px; }
.tc { left: 19px; font-size: 12px; }
.quality { left: 0; right: 0; padding-left: 258px; text-align: center; font-size: 11px; }
.playbar { grid-column: 1 / 3; display: grid; grid-template-columns: 512px auto 1fr; align-items: center; background: #464646; padding: 0 4px 0 6px; }
.field.zoom { width: 76px; }
.play { display: flex; gap: 2px; }
.play button { width: 18px; height: 18px; display: grid; place-items: center; background: #2e2e2e; }
.play .ic { width: 14px; height: 14px; }
.play .loop { margin-left: 5px; }
.opts { display: flex; gap: 3px; justify-content: flex-end; }
.opt { display: flex; align-items: center; gap: 2px; height: 18px; padding: 0 1px; background: #303030; color: #ccc; }
.opt .ic { width: 15px; height: 15px; }
.opt .sm { width: 12px; height: 12px; color: #888; }
.opt em { color: #666; padding: 0 5px; }

/* scene window */
.scene { display: flex; flex-direction: column; padding-top: 6px; min-height: 0; }
.scene .tabs { flex: none; }
.scene .tab + .tab { padding: 0 7px; }
.scenebody { flex: 1; display: grid; grid-template-columns: 702px minmax(0, 1fr); min-height: 0; background: #292929; }
.layers { display: flex; flex-direction: column; padding-top: 22px; background: #454545; }
.layers .searchrow { height: 23px; padding: 0 5px 0 3px; gap: 3px; flex: none; }
.layers .pill { flex: none; width: 492px; gap: 3px; }
.layers .searchrow .tool:first-of-type { margin-left: 0; }
.fr { margin-left: auto; display: flex; gap: 3px; align-items: center; }
.fr .num { width: 92px; height: 19px; }
.layerwrap { flex: 1; display: flex; background: #292929; min-height: 0; align-items: stretch; }
.layerwrap .scroll { width: 15px; flex: none; background: #4c4c4c; border: solid #1e1e1e; border-width: 0 3px 0 2px; border-top: 19px solid #454545; }
.layertable { flex: 1; width: 100%; border-collapse: collapse; table-layout: fixed; align-self: flex-start; }
.layertable th, .layertable td { padding: 0; font-weight: inherit; text-align: left; height: 19px; line-height: 19px; color: #c8c8c8; }
.layertable thead tr { background: #454545; }
.layertable tbody tr { background: #4c4856; }
.layertable tbody td { height: 22px; line-height: 22px; }
.c0 { width: 20px; }
.c1 { width: 19px; }
.layertable .ic { width: 15px; height: 15px; margin: 0 2px; }
.layertable .nm { padding-left: 36px; }
.layertable th.nm { padding-left: 39px; }
.layertable .nm .ic { display: inline-block; vertical-align: -3px; margin: 0 3px 0 0; width: 17px; }
.cell { display: block; width: 17px; height: 20px; margin-left: 1px; background: #2e2e2e; padding-top: 2px; }
.cell .ic { margin: 0 1px; }
.purple { background: #b18cf5; width: 16px; margin-left: 1px; }
.timeline { position: relative; display: flex; flex-direction: column; min-width: 0; background: #1d1d1d; }
.comptitle { height: 22px; line-height: 24px; text-align: center; background: #454545; padding-right: 94px; }
.truler { background: #252525; flex: none; display: block; }
.ttext { fill: #c4c4c4; font: 500 12px "Noto Sans", sans-serif; text-anchor: middle; }
.strip { height: 16px; flex: none; background: #454545; margin-left: 18px; }
.tracks { flex: 1; margin-left: 17px; padding-top: 3px; background: #292929; }
.clip { height: 19px; line-height: 16px; padding-left: 7px; font-size: 12px; color: #f8ecff; border: 1px solid #e2c6f8; border-right: 0; border-radius: 3px 0 0 3px; background: repeating-linear-gradient(90deg, #d3a5f5 0 1px, #c393ea 1px 4px); }
.playhead { position: absolute; left: 9px; top: 35px; }
.grip { position: absolute; left: 1px; bottom: 20px; width: 2px; height: 18px; background: repeating-linear-gradient(#777 0 1px, transparent 1px 3px); }

.caption { position: absolute; left: 0; right: 0; bottom: 59px; text-align: center; font: 53px/60px "Liberation Sans", sans-serif; color: #fff; text-shadow: 2px 2px 3px #000; pointer-events: none; }
```
